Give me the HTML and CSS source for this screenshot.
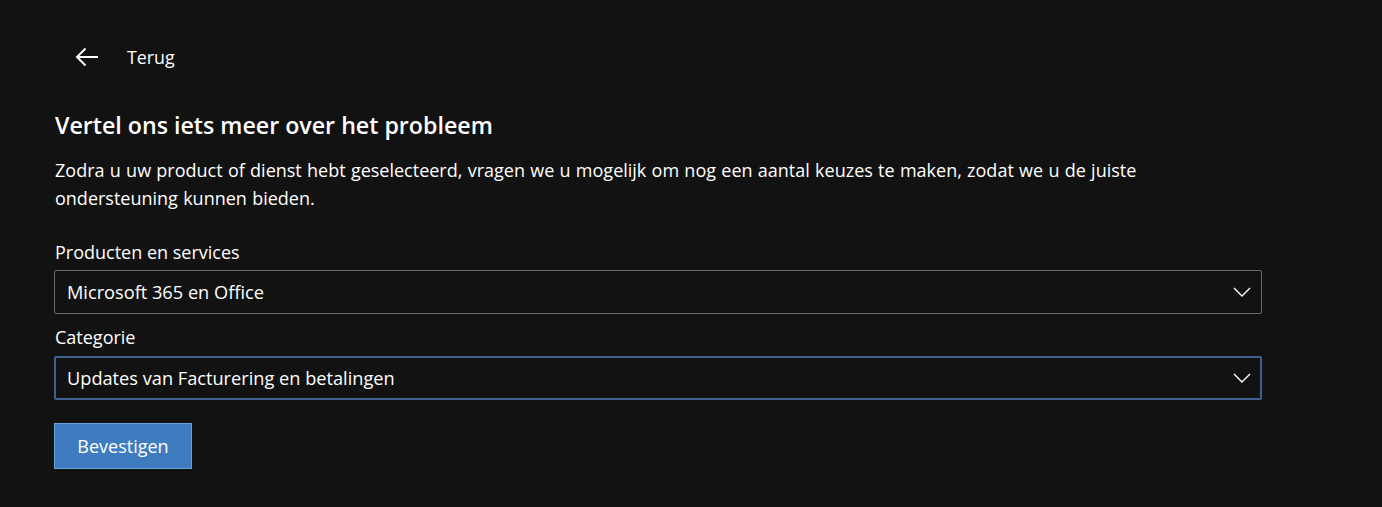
FILE: index.html
```html
<!DOCTYPE html>
<html lang="nl">
<head>
<meta charset="utf-8">
<link rel="stylesheet" href="styles.css">
</head>
<body>
<main class="page">
  <a class="back" href="#">
    <svg class="back-icon" width="24" height="20" viewBox="0 0 24 20" aria-hidden="true">
      <path d="M23 10H2.5 M10.5 1.5L2 10L10.5 18.5" fill="none" stroke="#fff" stroke-width="2"/>
    </svg>
    <span>Terug</span>
  </a>
  <h1 class="title">Vertel ons iets meer over het probleem</h1>
  <p class="intro">Zodra u uw product of dienst hebt geselecteerd, vragen we u mogelijk om nog een aantal keuzes te maken, zodat we u de juiste ondersteuning kunnen bieden.</p>
  <div class="field">
    <div class="label">Producten en services</div>
    <div class="select">
      <span>Microsoft 365 en Office</span>
      <svg class="chev" width="18" height="10" viewBox="0 0 18 10"><path d="M1 1L9 9L17 1" fill="none" stroke="#fff" stroke-width="1.4"/></svg>
    </div>
  </div>
  <div class="field">
    <div class="label">Categorie</div>
    <div class="select focused">
      <span>Updates van Facturering en betalingen</span>
      <svg class="chev" width="18" height="10" viewBox="0 0 18 10"><path d="M1 1L9 9L17 1" fill="none" stroke="#fff" stroke-width="1.4"/></svg>
    </div>
  </div>
  <button class="btn">Bevestigen</button>
</main>
</body>
</html>
```
FILE: styles.css
```css
html, body {
  margin: 0;
  background: #121212;
  color: #fff;
  font-family: "Open Sans", "Noto Sans", sans-serif;
}
.page {
  padding: 38px 0 0 54px;
  width: 1208px;
}
.back {
  display: flex;
  align-items: center;
  gap: 28px;
  color: #fff;
  text-decoration: none;
  font-size: 17.8px;
  margin-left: 21px;
  height: 38px;
}
.title {
  font-size: 23.2px;
  font-weight: 600;
  margin: 34px 0 0 1px;
  line-height: 30px;
}
.intro {
  font-size: 18px;
  line-height: 28px;
  margin: 16px 0 0 1px;
  word-spacing: 0.6px;
  max-width: 1110px;
}
.field { margin-top: 28px; }
.field + .field { margin-top: 11px; }
.label {
  font-size: 18px;
  line-height: 24px;
  margin: 0 0 6px 1px;
}
.select {
  height: 44px;
  box-sizing: border-box;
  border: 1px solid #6b6b6b;
  border-radius: 2px;
  display: flex;
  align-items: center;
  justify-content: space-between;
  padding: 0 10px 0 12px;
  font-size: 18.2px;
}
.select.focused {
  border: 2px solid #3f6190;
  padding: 0 9px 0 11px;
  margin-top: 7px;
}
.btn {
  margin-top: 23px;
  width: 138px;
  height: 46px;
  background: #3f7bbf;
  border: 1px solid #6c9fd9;
  color: #fff;
  font-family: inherit;
  font-size: 18px;
  border-radius: 0;
}
```
